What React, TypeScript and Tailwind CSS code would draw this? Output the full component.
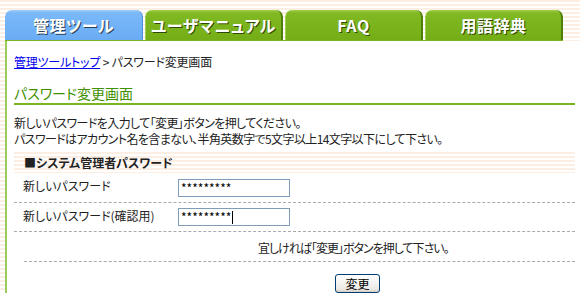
import React from "react";

const font = { fontFamily: '"Noto Sans CJK JP", "Noto Sans", sans-serif', fontFeatureSettings: '"palt"' } as React.CSSProperties;

function Tab({ label, blue }: { label: string; blue?: boolean }) {
  return (
    <div
      className={
        blue
          ? "w-[138px] h-[30px] rounded-t-[7px] flex items-center justify-center text-[16px] font-bold text-white bg-[linear-gradient(to_bottom,#9fcdfb_0px,#7ab8f8_3px,#6aacf4_100%)] border-r border-r-[#4f8fd8] [text-shadow:1px_1px_0_#2a3f55]"
          : "w-[138px] h-[30px] rounded-t-[7px] flex items-center justify-center text-[16px] font-bold text-white bg-[linear-gradient(to_bottom,#a2d04e_0px,#80b922_3px,#74ad15_100%)] border-r-2 border-r-[#4f7f0b] border-l border-l-[#9fd24e] [text-shadow:1px_1px_0_#2f4a08]"
      }
    >
      <span className="tracking-[0.5px]">{label}</span>
    </div>
  );
}

function FakeInput({ caret }: { caret?: boolean }) {
  return (
    <div className="w-[112px] h-[18px] border border-[#7f9db9] bg-white flex items-center pl-[2px] text-[12px] leading-none text-black">
      <span>*********</span>
      {caret && <span className="inline-block w-[1px] h-[13px] bg-black ml-[1px]" />}
    </div>
  );
}

export default function App() {
  return (
    <div className="w-[580px] h-[302px] overflow-hidden bg-white text-[#222]" style={font}>
      <div className="h-[291px] bg-[repeating-linear-gradient(to_bottom,#fdeee3_0px,#fdeee3_2px,#ffffff_2px,#ffffff_4px)] pt-[10px] flex flex-col">
        <div className="ml-[5px] w-[558px] flex gap-[2px] border-b border-[#7ab51d]">
          <Tab label="管理ツール" blue />
          <Tab label="ユーザマニュアル" />
          <Tab label="FAQ" />
          <Tab label="用語辞典" />
        </div>
        <div className="ml-[5px] flex-1 bg-white border-l-2 border-[#9ccb5a] pl-[7px] pr-[5px]">
          <div className="mt-[13px] text-[12px] leading-[15px] tracking-[-0.2px]">
            <a className="text-[#0000ee] underline">管理ツールトップ</a>
            <span> &gt; パスワード変更画面</span>
          </div>
          <div className="mt-[15px] text-[14px] leading-[18px] text-[#3f8f00] border-b-2 border-[#7ab51d] pb-[1px]">
            パスワード変更画面
          </div>
          <div className="mt-[10px] text-[12px] leading-[16px] tracking-[-0.6px]">
            <div>新しいパスワードを入力して「変更」ボタンを押してください。</div>
            <div>パスワードはアカウント名を含まない、半角英数字で5文字以上14文字以下にして下さい。</div>
          </div>
          <div className="mt-[5px] h-[21px] bg-[repeating-linear-gradient(to_bottom,#fdeee3_0px,#fdeee3_2px,#ffffff_2px,#ffffff_4px)] flex items-center pl-[10px] text-[12px] font-bold">
            ■システム管理者パスワード
          </div>
          <div className="h-[30px] flex items-center border-b border-dashed border-[#aaaaaa] text-[12px]">
            <div className="w-[164px] pl-[9px] -mt-[4px]">新しいパスワード</div>
            <FakeInput />
          </div>
          <div className="h-[29px] flex items-center border-b border-dashed border-[#aaaaaa] text-[12px]">
            <div className="w-[164px] pl-[9px] -mt-[2px]">新しいパスワード(確認用)</div>
            <FakeInput caret />
          </div>
          <div className="ml-[10px] h-[30px] flex items-center border-b border-dashed border-[#aaaaaa] text-[12px] tracking-[-1px]">
            <div className="pl-[234px] pt-[2px]">宜しければ「変更」ボタンを押して下さい。</div>
          </div>
          <div className="pl-[321px] pt-[12px]">
            <button className="w-[45px] h-[19px] rounded-[3px] border border-[#003c74] bg-[linear-gradient(to_bottom,#ffffff,#ecebe6_80%,#d6d0c5)] text-[12px] leading-none text-black flex items-center justify-center">
              変更
            </button>
          </div>
        </div>
      </div>
    </div>
  );
}
